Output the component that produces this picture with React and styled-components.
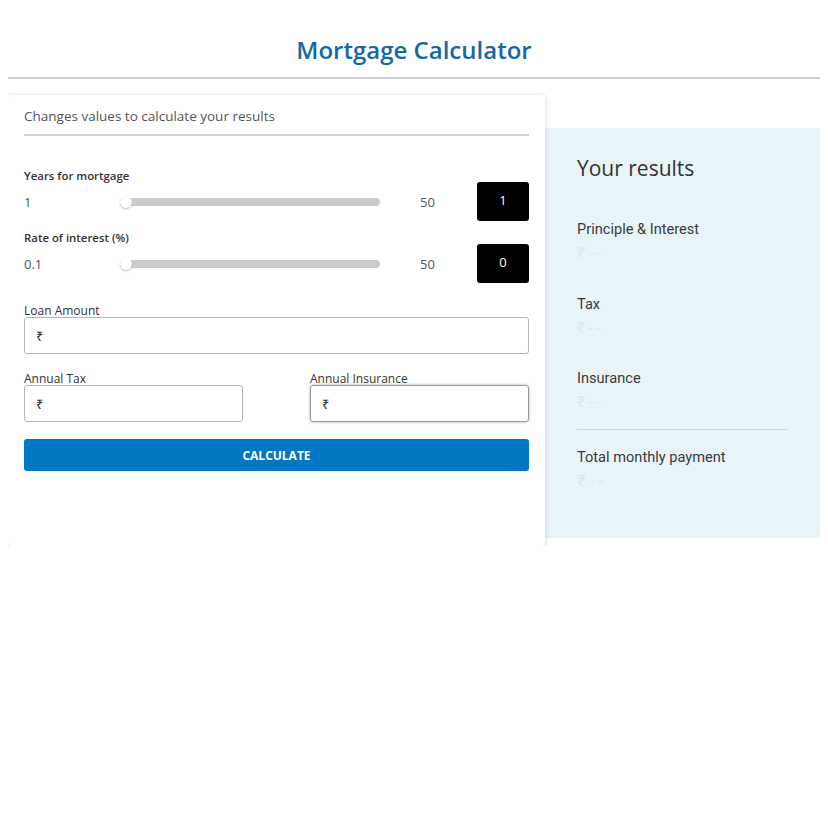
import React, { useState } from 'react'
import styled, { createGlobalStyle } from 'styled-components'

const GlobalStyle = createGlobalStyle`
  body {
    margin: 8px;
    background: #fff;
    font-family: "Open Sans", "Liberation Sans", sans-serif;
  }
  * { box-sizing: border-box; }
`

const Header = styled.header`
  padding-top: 22px;
  border-bottom: 2px solid #cfcfcf;
  padding-bottom: 7px;
`

const Title = styled.h1`
  margin: 0;
  text-align: center;
  font-size: 24px;
  font-weight: 600;
  line-height: 40px;
  color: #1469a3;
`

const Main = styled.div`
  display: flex;
  align-items: flex-start;
  margin-top: 16px;
`

const Card = styled.section`
  width: 537px;
  background: #fff;
  border-radius: 4px;
  box-shadow: 0 1px 5px rgba(0, 0, 0, 0.18);
  padding: 10px 16px 75px;
  position: relative;
  z-index: 1;
`

const Subtitle = styled.div`
  font-size: 13.5px;
  color: #555;
  line-height: 22px;
  padding-bottom: 7px;
  border-bottom: 2px solid #d0d0d0;
  margin-bottom: 32px;
`

const FieldLabel = styled.div`
  font-size: ${p => (p.$plain ? 12 : 11.4)}px;
  font-weight: ${p => (p.$plain ? 400 : 600)};
  color: #333;
  line-height: 16px;
  margin-top: ${p => p.$top || 0}px;
`

const SliderRow = styled.div`
  display: grid;
  grid-template-columns: 96px 260px 1fr 52px;
  align-items: center;
  height: 39px;
  margin-top: -2px;
`

const Bound = styled.span`
  font-size: 13px;
  color: #4a5560;
  padding-top: 1px;
  padding-left: ${p => p.$pad || 0}px;
`

const Track = styled.div`
  position: relative;
  height: 8px;
  background: #cccccc;
  border-radius: 4px;
`

const Thumb = styled.div`
  position: absolute;
  left: 0;
  top: 50%;
  width: 12px;
  height: 12px;
  margin-top: -6px;
  border-radius: 50%;
  background: #fff;
  box-shadow: 0 1px 2px rgba(0, 0, 0, 0.25);
`

const ValueBox = styled.div`
  width: 52px;
  height: 39px;
  background: #000;
  color: #fff;
  border-radius: 3px;
  font-size: 13px;
  display: flex;
  align-items: flex-start;
  justify-content: center;
  padding-top: 10px;
  line-height: 16px;
`

const InputWrap = styled.label`
  display: block;
`

const TextBox = styled.div`
  height: 37px;
  border: 1px solid ${p => (p.$focus ? '#999' : '#b5b5b5')};
  border-radius: 3px;
  display: flex;
  align-items: center;
  padding-left: 11px;
  font-size: 13px;
  color: #222;
  box-shadow: ${p => (p.$focus ? '0 0 3px rgba(0,0,0,0.35)' : 'none')};
  margin-top: -2px;
`

const TwoCol = styled.div`
  display: grid;
  grid-template-columns: 219px 219px;
  justify-content: space-between;
  margin-top: 17px;
`

const LoanBlock = styled.div`
  margin-top: 20px;
`

const Button = styled.button`
  width: 100%;
  height: 32px;
  margin-top: 17px;
  border: none;
  border-radius: 3px;
  background: #0077c2;
  color: #fff;
  font-family: "Open Sans", "Liberation Sans", sans-serif;
  font-size: 12px;
  font-weight: 700;
  cursor: pointer;
`

const Results = styled.aside`
  flex: 1;
  margin-top: 33px;
  height: 410px;
  background: #e9f4f9;
  padding: 26px 32px 0;
`

const ResultsTitle = styled.h2`
  margin: 0 0 37px;
  font-size: 21px;
  font-weight: 400;
  color: #333;
  line-height: 28px;
`

const ResultItem = styled.div`
  font-family: Roboto, "Liberation Sans", sans-serif;
  margin-bottom: 30.5px;
`

const ResultLabel = styled.div`
  font-size: 14.6px;
  color: #3b3b3b;
  line-height: 20px;
`

const ResultValue = styled.div`
  font-size: ${p => (p.$big ? 17 : 15)}px;
  color: #e0e6e9;
  line-height: 20px;
  margin-top: 4px;
`

const Divider = styled.hr`
  border: none;
  border-top: 1px solid #cfd6da;
  margin: -14px 0 17px;
`

function Slider({ label, min, max, value, top }) {
  return (
    <>
      <FieldLabel $top={top}>{label}</FieldLabel>
      <SliderRow>
        <Bound>{min}</Bound>
        <Track>
          <Thumb />
        </Track>
        <Bound $pad={40}>{max}</Bound>
        <ValueBox>{value}</ValueBox>
      </SliderRow>
    </>
  )
}

function Field({ label, focus }) {
  return (
    <InputWrap>
      <FieldLabel $plain>{label}</FieldLabel>
      <TextBox $focus={focus}>₹</TextBox>
    </InputWrap>
  )
}

function Result({ label, big }) {
  return (
    <ResultItem>
      <ResultLabel>{label}</ResultLabel>
      <ResultValue $big={big}>₹ - -</ResultValue>
    </ResultItem>
  )
}

export default function App() {
  const [years] = useState(1)
  const [rate] = useState(0)
  return (
    <>
      <GlobalStyle />
      <Header>
        <Title>Mortgage Calculator</Title>
      </Header>
      <Main>
        <Card>
          <Subtitle>Changes values to calculate your results</Subtitle>
          <Slider label="Years for mortgage" min="1" max="50" value={years} />
          <Slider label="Rate of interest (%)" min="0.1" max="50" value={rate} top={9} />
          <LoanBlock>
            <Field label="Loan Amount" />
          </LoanBlock>
          <TwoCol>
            <Field label="Annual Tax" />
            <Field label="Annual Insurance" focus />
          </TwoCol>
          <Button>CALCULATE</Button>
        </Card>
        <Results>
          <ResultsTitle>Your results</ResultsTitle>
          <Result label="Principle & Interest" />
          <Result label="Tax" />
          <Result label="Insurance" />
          <Divider />
          <Result label="Total monthly payment" big />
        </Results>
      </Main>
    </>
  )
}
